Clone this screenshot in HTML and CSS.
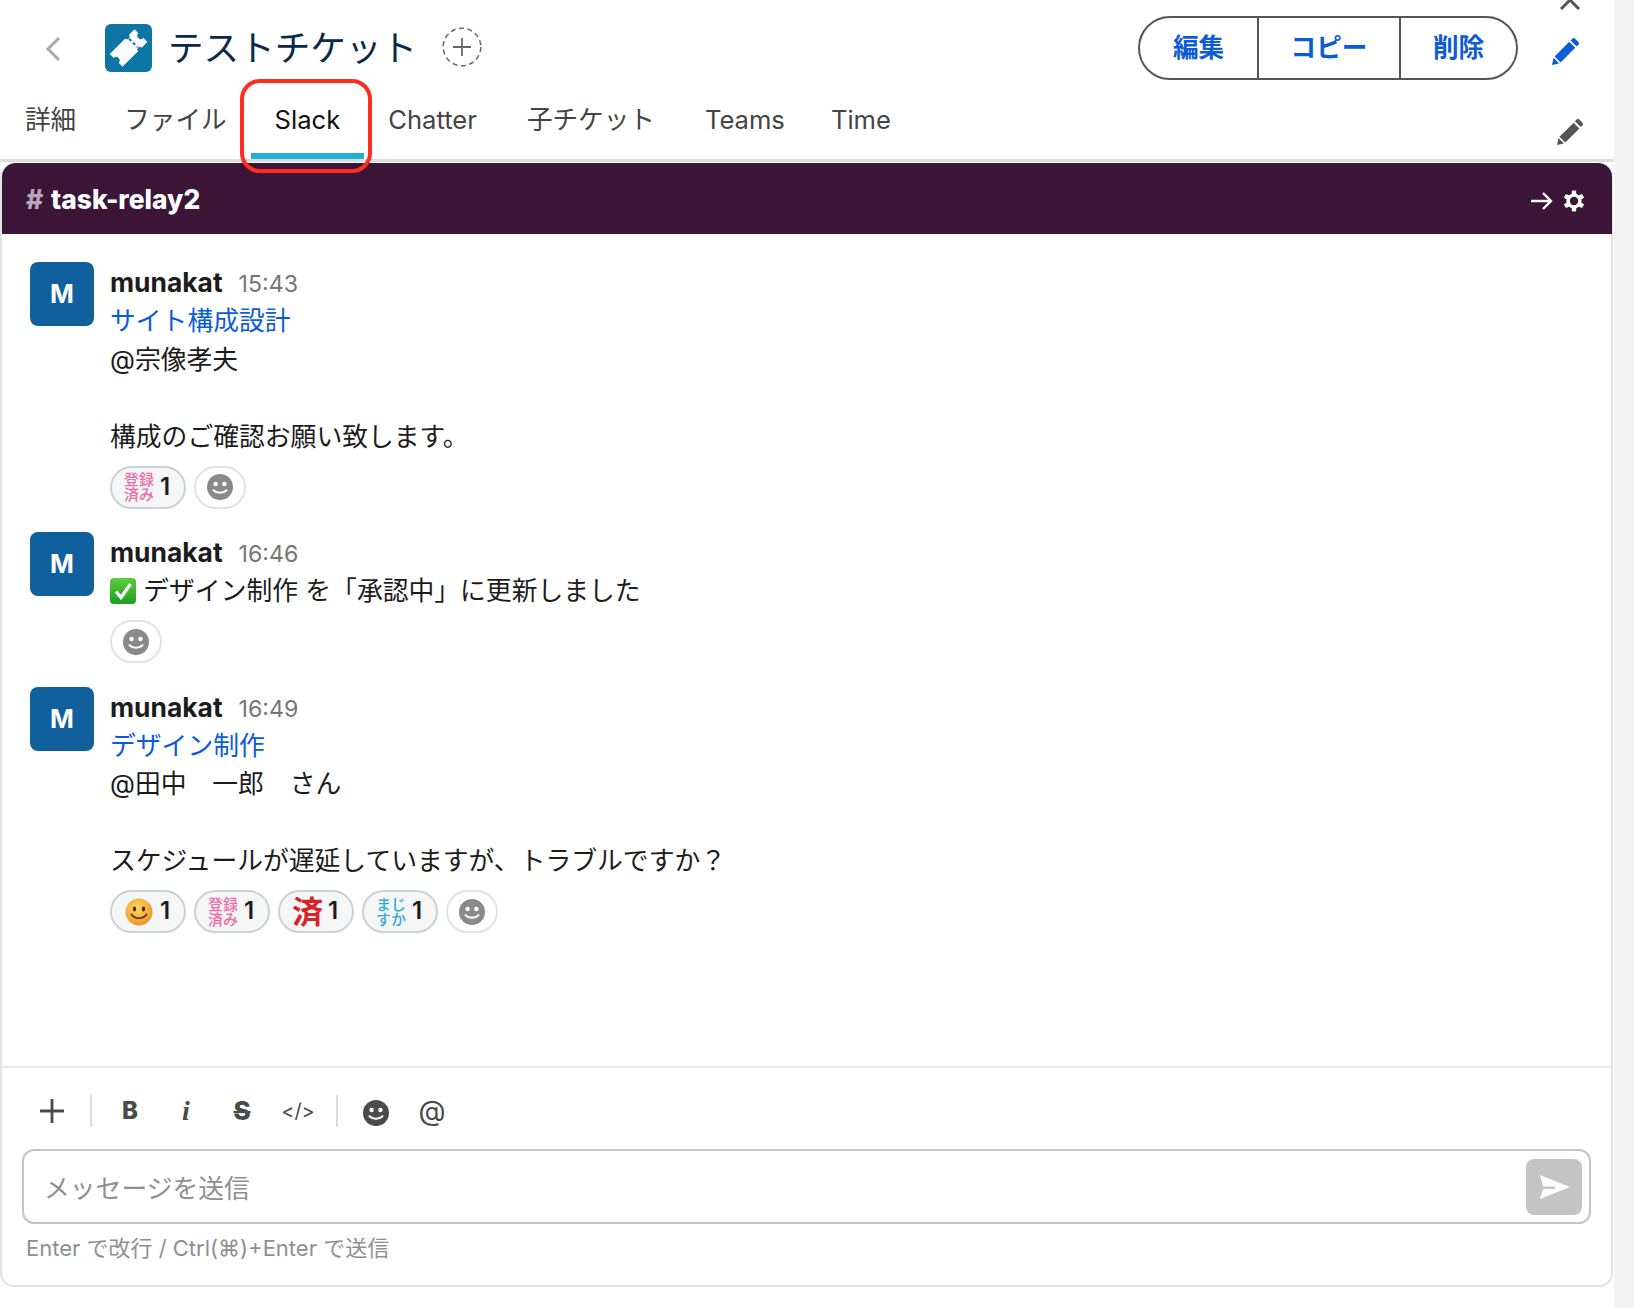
FILE: index.html
```html
<!DOCTYPE html>
<html lang="ja">
<head>
    <meta charset="UTF-8">
    <title>テストチケット</title>
    <link rel="stylesheet" href="styles.css">
</head>
<body>
    <svg class="defs" width="0" height="0">
        <symbol id="smile" viewBox="0 0 26 26">
            <circle cx="13" cy="13" r="13" fill="currentColor"/>
            <circle cx="8.6" cy="10" r="2.2" fill="#fff"/>
            <circle cx="17.4" cy="10" r="2.2" fill="#fff"/>
            <path d="M6.5 16.2c3.6 3.4 9.4 3.4 13 0" fill="none" stroke="#fff" stroke-width="2" stroke-linecap="round"/>
        </symbol>
        <symbol id="pencil" viewBox="0 0 28 28">
            <path d="M20.6 1.4a1.6 1.6 0 0 1 2.2 0l3.8 3.8a1.6 1.6 0 0 1 0 2.2l-2 2-6-6z" fill="currentColor"/>
            <path d="M17.2 4.8l6 6L8.6 25.4l-6-6z" fill="currentColor"/>
            <path d="M1.6 20.8l5.6 5.6L0 28z" fill="currentColor"/>
        </symbol>
    </svg>

    <div class="page">
        <!-- タイトル行 -->
        <div class="title-row">
            <svg class="back" width="16" height="26" viewBox="0 0 16 26"><path d="M14 2L3 13l11 11" fill="none" stroke="#aaa" stroke-width="3"/></svg>
            <svg class="app-icon" width="47" height="48" viewBox="0 0 47 48">
                <rect width="47" height="48" rx="6" fill="#0d76a4"/>
                <g transform="rotate(-45 23.5 24)">
                    <path d="M6 15h22a2.500 2.500 0 0 0 5 0h8v5.500a3.500 3.500 0 0 0 0 7V33h-8a2.500 2.500 0 0 0-5 0H6v-5.500a3.500 3.500 0 0 0 0-7z" fill="#fff"/>
                    <path d="M30.500 18v12" stroke="#0d76a4" stroke-width="2" stroke-dasharray="3 2.500"/>
                </g>
            </svg>
            <h1 class="title">テストチケット</h1>
            <svg class="follow" width="40" height="40" viewBox="0 0 40 40">
                <circle cx="20" cy="20" r="18.800" fill="none" stroke="#666" stroke-width="1.500" stroke-dasharray="5 3.500"/>
                <path d="M20 11v18M11 20h18" stroke="#666" stroke-width="1.800"/>
            </svg>
            <div class="btn-group">
                <div class="btn btn-edit">編集</div>
                <div class="btn btn-copy">コピー</div>
                <div class="btn btn-del">削除</div>
            </div>
            <svg class="pencil-blue" width="28" height="28"><use href="#pencil"/></svg>
            <svg class="close-up" width="22" height="12" viewBox="0 0 22 12"><path d="M2 11L11 2l9 9" fill="none" stroke="#555" stroke-width="3"/></svg>
        </div>

        <!-- タブ -->
        <div class="tabs">
            <div class="tab">詳細</div>
            <div class="tab">ファイル</div>
            <div class="tab active">Slack</div>
            <div class="tab tab-chatter">Chatter</div>
            <div class="tab tab-kids">子チケット</div>
            <div class="tab tab-teams">Teams</div>
            <div class="tab">Time</div>
            <svg class="pencil-grey" width="27" height="27"><use href="#pencil"/></svg>
            <div class="red-mark"></div>
        </div>

        <div class="panel">
            <div class="panel-head">
                <div class="channel"><span class="hash">#</span> task-relay2</div>
                <svg class="arrow" width="22" height="20" viewBox="0 0 22 20"><path d="M0 10h20M12 2l8 8-8 8" fill="none" stroke="#fff" stroke-width="2.400"/></svg>
                <svg class="gear" width="22" height="22" viewBox="0 0 22 22">
                    <g fill="#fff">
                        <circle cx="11" cy="11" r="7.600"/>
                        <rect x="8.800" y="0.500" width="4.400" height="21" rx="1"/>
                        <rect x="8.800" y="0.500" width="4.400" height="21" rx="1" transform="rotate(60 11 11)"/>
                        <rect x="8.800" y="0.500" width="4.400" height="21" rx="1" transform="rotate(120 11 11)"/>
                    </g>
                    <circle cx="11" cy="11" r="4.200" fill="#3a1538"/>
                </svg>
            </div>

            <div class="messages">
                <div class="msg">
                    <div class="avatar">M</div>
                    <div class="msg-body">
                        <div class="msg-head"><span class="name">munakat</span><span class="time">15:43</span></div>
                        <div><a class="link">サイト構成設計</a></div>
                        <div>@宗像孝夫</div>
                        <div>&nbsp;</div>
                        <div>構成のご確認お願い致します。</div>
                        <div class="reactions">
                            <div class="pill"><div class="stamp pink">登録<br>済み</div><span class="count">1</span></div>
                            <div class="pill add"><svg class="smile" width="26" height="26"><use href="#smile"/></svg></div>
                        </div>
                    </div>
                </div>

                <div class="msg">
                    <div class="avatar">M</div>
                    <div class="msg-body">
                        <div class="msg-head"><span class="name">munakat</span><span class="time">16:46</span></div>
                        <div class="status">
                            <svg class="check" width="26" height="26" viewBox="0 0 26 26">
                                <defs><linearGradient id="gr" x1="0" y1="0" x2="0" y2="1"><stop offset="0" stop-color="#5ccb3e"/><stop offset="1" stop-color="#1f9e22"/></linearGradient></defs>
                                <rect width="26" height="26" rx="4" fill="url(#gr)"/>
                                <path d="M6 13.500l5 6L20.500 6" fill="none" stroke="#fff" stroke-width="3.200"/>
                            </svg>
                            デザイン制作 を「承認中」に更新しました
                        </div>
                        <div class="reactions">
                            <div class="pill add"><svg class="smile" width="26" height="26"><use href="#smile"/></svg></div>
                        </div>
                    </div>
                </div>

                <div class="msg">
                    <div class="avatar">M</div>
                    <div class="msg-body">
                        <div class="msg-head"><span class="name">munakat</span><span class="time">16:49</span></div>
                        <div><a class="link">デザイン制作</a></div>
                        <div>@田中　一郎　さん</div>
                        <div>&nbsp;</div>
                        <div>スケジュールが遅延していますが、トラブルですか？</div>
                        <div class="reactions">
                            <div class="pill">
                                <svg class="stamp" width="28" height="28" viewBox="0 0 28 28">
                                    <defs><radialGradient id="ye" cx="0.450" cy="0.350" r="0.750"><stop offset="0" stop-color="#ffd75e"/><stop offset="1" stop-color="#f08a24"/></radialGradient></defs>
                                    <circle cx="14" cy="14" r="13.500" fill="url(#ye)"/>
                                    <ellipse cx="9.500" cy="11" rx="1.700" ry="2.400" fill="#4a2c12"/>
                                    <ellipse cx="18.500" cy="11" rx="1.700" ry="2.400" fill="#4a2c12"/>
                                    <path d="M6.500 16.500c3.500 5 11.500 5 15 0" fill="none" stroke="#4a2c12" stroke-width="1.600" stroke-linecap="round"/>
                                </svg>
                                <span class="count">1</span>
                            </div>
                            <div class="pill"><div class="stamp pink">登録<br>済み</div><span class="count">1</span></div>
                            <div class="pill"><div class="stamp red">済</div><span class="count">1</span></div>
                            <div class="pill"><div class="stamp blue">まじ<br>すか</div><span class="count">1</span></div>
                            <div class="pill add"><svg class="smile" width="26" height="26"><use href="#smile"/></svg></div>
                        </div>
                    </div>
                </div>
            </div>

            <div class="composer">
                <div class="toolbar">
                    <svg class="tool-plus" width="26" height="26" viewBox="0 0 26 26"><path d="M13 1v24M1 13h24" stroke="#4a4a4a" stroke-width="2.800"/></svg>
                    <div class="sep"></div>
                    <div class="tool tool-b">B</div>
                    <div class="tool tool-i">i</div>
                    <div class="tool tool-s">S</div>
                    <div class="tool tool-code">&lt;/&gt;</div>
                    <div class="sep"></div>
                    <div class="tool"><svg class="dark-smile" width="26" height="26"><use href="#smile"/></svg></div>
                    <div class="tool tool-at">@</div>
                </div>
                <div class="input">
                    <div class="placeholder">メッセージを送信</div>
                    <div class="send">
                        <svg width="32" height="26" viewBox="0 0 32 26"><path d="M2 1l30 12L2 25l3-10h12v-2.400H5z" fill="#fff"/></svg>
                    </div>
                </div>
                <div class="hint">Enter で改行 / Ctrl(⌘)+Enter で送信</div>
            </div>
        </div>
    </div>
</body>
</html>
```

FILE: styles.css
```css
body{
    margin: 0;
    background-color: #f3f3f3;
    font-family: Inter, "Noto Sans CJK JP", sans-serif;
    font-size: 25.8px;
    color: #1d1c1d;
}
.defs{
    position: absolute;
}
.page{
    position: relative;
    width: 1614px;
    height: 1308px;
    background-color: #fff;
    display: flex;
    flex-direction: column;
    overflow: hidden;
}

/* タイトル行 */
.title-row{
    position: relative;
    height: 94px;
    display: flex;
    align-items: center;
    padding-left: 45px;
    flex-shrink: 0;
}
.back{
    margin-top: 4px;
}
.app-icon{
    margin-left: 44px;
    margin-top: 1px;
}
.title{
    margin: 0 0 4px 16px;
    font-size: 35.6px;
    font-weight: 400;
    color: #0b2a4a;
    width: 257px;
    white-space: nowrap;
}
.follow{
    margin-left: 17px;
}
.btn-group{
    display: flex;
    margin: 2px 0 0 656px;
    height: 64px;
    border: 2px solid #555;
    border-radius: 32px;
    box-sizing: border-box;
    color: #0b5cd5;
    font-weight: 700;
    font-size: 25.6px;
    line-height: 58px;
}
.btn{
    display: flex;
    align-items: center;
    justify-content: center;
    border-left: 2px solid #555;
    box-sizing: border-box;
}
.btn-edit{
    width: 117px;
    border-left: 0;
}
.btn-copy{
    width: 142px;
}
.btn-del{
    width: 117px;
}
.pencil-blue{
    margin: 8px 0 0 34px;
    color: #0b5cd5;
}
.close-up{
    position: absolute;
    top: -2px;
    left: 1559px;
}

/* タブ */
.tabs{
    position: relative;
    height: 65px;
    display: flex;
    padding-left: 1px;
    border-bottom: 3px solid #ddd;
    flex-shrink: 0;
    color: #444;
    font-size: 25.6px;
}
.tab{
    padding: 7px 24px 0;
    height: 58px;
    line-height: 38px;
}
.tab.active{
    color: #111;
    border-bottom: 6px solid #1fb1cf;
    height: 52px;
}
.tab-chatter{
    margin-right: 2px;
}
.tab-kids{
    margin-right: 2px;
}
.tab-teams{
    margin-right: -2px;
}
.pencil-grey{
    margin: 24px 30px 0 auto;
    color: #555;
}
.red-mark{
    position: absolute;
    left: 240px;
    top: -15px;
    width: 132px;
    height: 94px;
    box-sizing: border-box;
    border: 4px solid #ff2d20;
    border-radius: 20px;
}

/* Slackパネル */
.panel{
    width: 1613px;
    height: 1124px;
    margin-top: 1px;
    box-sizing: border-box;
    border: 2px solid #e3e3e3;
    border-top: 0;
    border-radius: 14px;
    display: flex;
    flex-direction: column;
}
.panel-head{
    height: 71px;
    background-color: #3a1538;
    border-radius: 14px 14px 0 0;
    margin: 0 -1px 0 0;
    display: flex;
    align-items: center;
    padding-left: 24px;
    color: #fff;
}
.channel{
    font-weight: 800;
    flex: 1;
    font-size: 26.4px;
}
.hash{
    color: #b7a6b6;
    margin-right: 2px;
}
.arrow{
    margin-top: 4px;
}
.gear{
    margin: 4px 27px 0 10px;
}

.messages{
    flex: 1;
    padding: 28px 0 0 28px;
    line-height: 38.5px;
}
.msg{
    display: flex;
    margin-bottom: 23.5px;
}
.avatar{
    width: 64px;
    height: 64px;
    border-radius: 8px;
    background-color: #11609e;
    color: #fff;
    font-weight: 700;
    text-align: center;
    line-height: 64px;
    flex-shrink: 0;
    font-size: 25.6px;
}
.msg-body{
    margin: 1px 0 0 16px;
}
.msg-head{
    height: 39px;
}
.name{
    font-weight: 700;
    font-size: 26.4px;
}
.time{
    font-size: 23.2px;
    color: #767676;
    margin-left: 16px;
}
.link{
    color: #0b5cd5;
}
.check{
    vertical-align: -4px;
}
.reactions{
    display: flex;
    gap: 8px;
    margin-top: 9.5px;
}
.pill{
    height: 43px;
    box-sizing: border-box;
    border: 2px solid #cdd2d9;
    border-radius: 22px;
    background-color: #f5f6f8;
    display: flex;
    align-items: center;
    width: 76px;
    padding-left: 12px;
}
.pill.add{
    width: 52px;
    padding-left: 11px;
    border-color: #e0e3e8;
    background-color: #fff;
}
.smile{
    color: #8a8a8a;
}
.stamp{
    width: 30px;
    font-size: 15px;
    line-height: 15px;
    font-weight: 500;
    text-align: center;
    flex-shrink: 0;
}
.pink{
    color: #ee6da3;
}
.blue{
    color: #2ea9d8;
}
.red{
    color: #d8232a;
    font-size: 31px;
    line-height: 31px;
    font-weight: 700;
}
.count{
    margin-left: 6px;
    font-size: 24px;
    font-weight: 600;
}

/* 入力欄 */
.composer{
    border-top: 2px solid #e8e8e8;
    padding: 25px 20px 22px;
    flex-shrink: 0;
}
.toolbar{
    display: flex;
    align-items: center;
    height: 36px;
    margin-bottom: 20px;
    color: #4a4a4a;
}
.tool-plus{
    margin-left: 17px;
}
.sep{
    width: 2px;
    height: 32px;
    background-color: #ddd;
    margin: 0 10px 0 25px;
}
.tool{
    width: 56px;
    text-align: center;
    line-height: 36px;
}
.tool + .sep{
    margin: 0 10px 0 10px;
}
.tool-b{
    font-weight: 800;
    font-size: 24px;
}
.tool-i{
    font-family: "Liberation Serif", serif;
    font-weight: 700;
    font-style: italic;
    font-size: 28px;
}
.tool-s{
    font-weight: 800;
    font-size: 26px;
    text-decoration: line-through;
    text-decoration-thickness: 2px;
}
.tool-code{
    font-size: 20px;
}
.tool-at{
    font-size: 28px;
}
.dark-smile{
    color: #4a4a4a;
    vertical-align: middle;
}
.input{
    height: 75px;
    box-sizing: border-box;
    border: 2px solid #c4c4c4;
    border-radius: 12px;
    display: flex;
    align-items: center;
    justify-content: space-between;
    padding: 0 7px 0 20px;
    width: 1569px;
}
.placeholder{
    color: #8f8f8f;
}
.send{
    width: 56px;
    height: 56px;
    border-radius: 8px;
    background-color: #c4c4c4;
    display: flex;
    align-items: center;
    justify-content: center;
}
.hint{
    margin: 9px 0 0 4px;
    font-size: 22px;
    line-height: 30px;
    color: #8f8f8f;
}
```
